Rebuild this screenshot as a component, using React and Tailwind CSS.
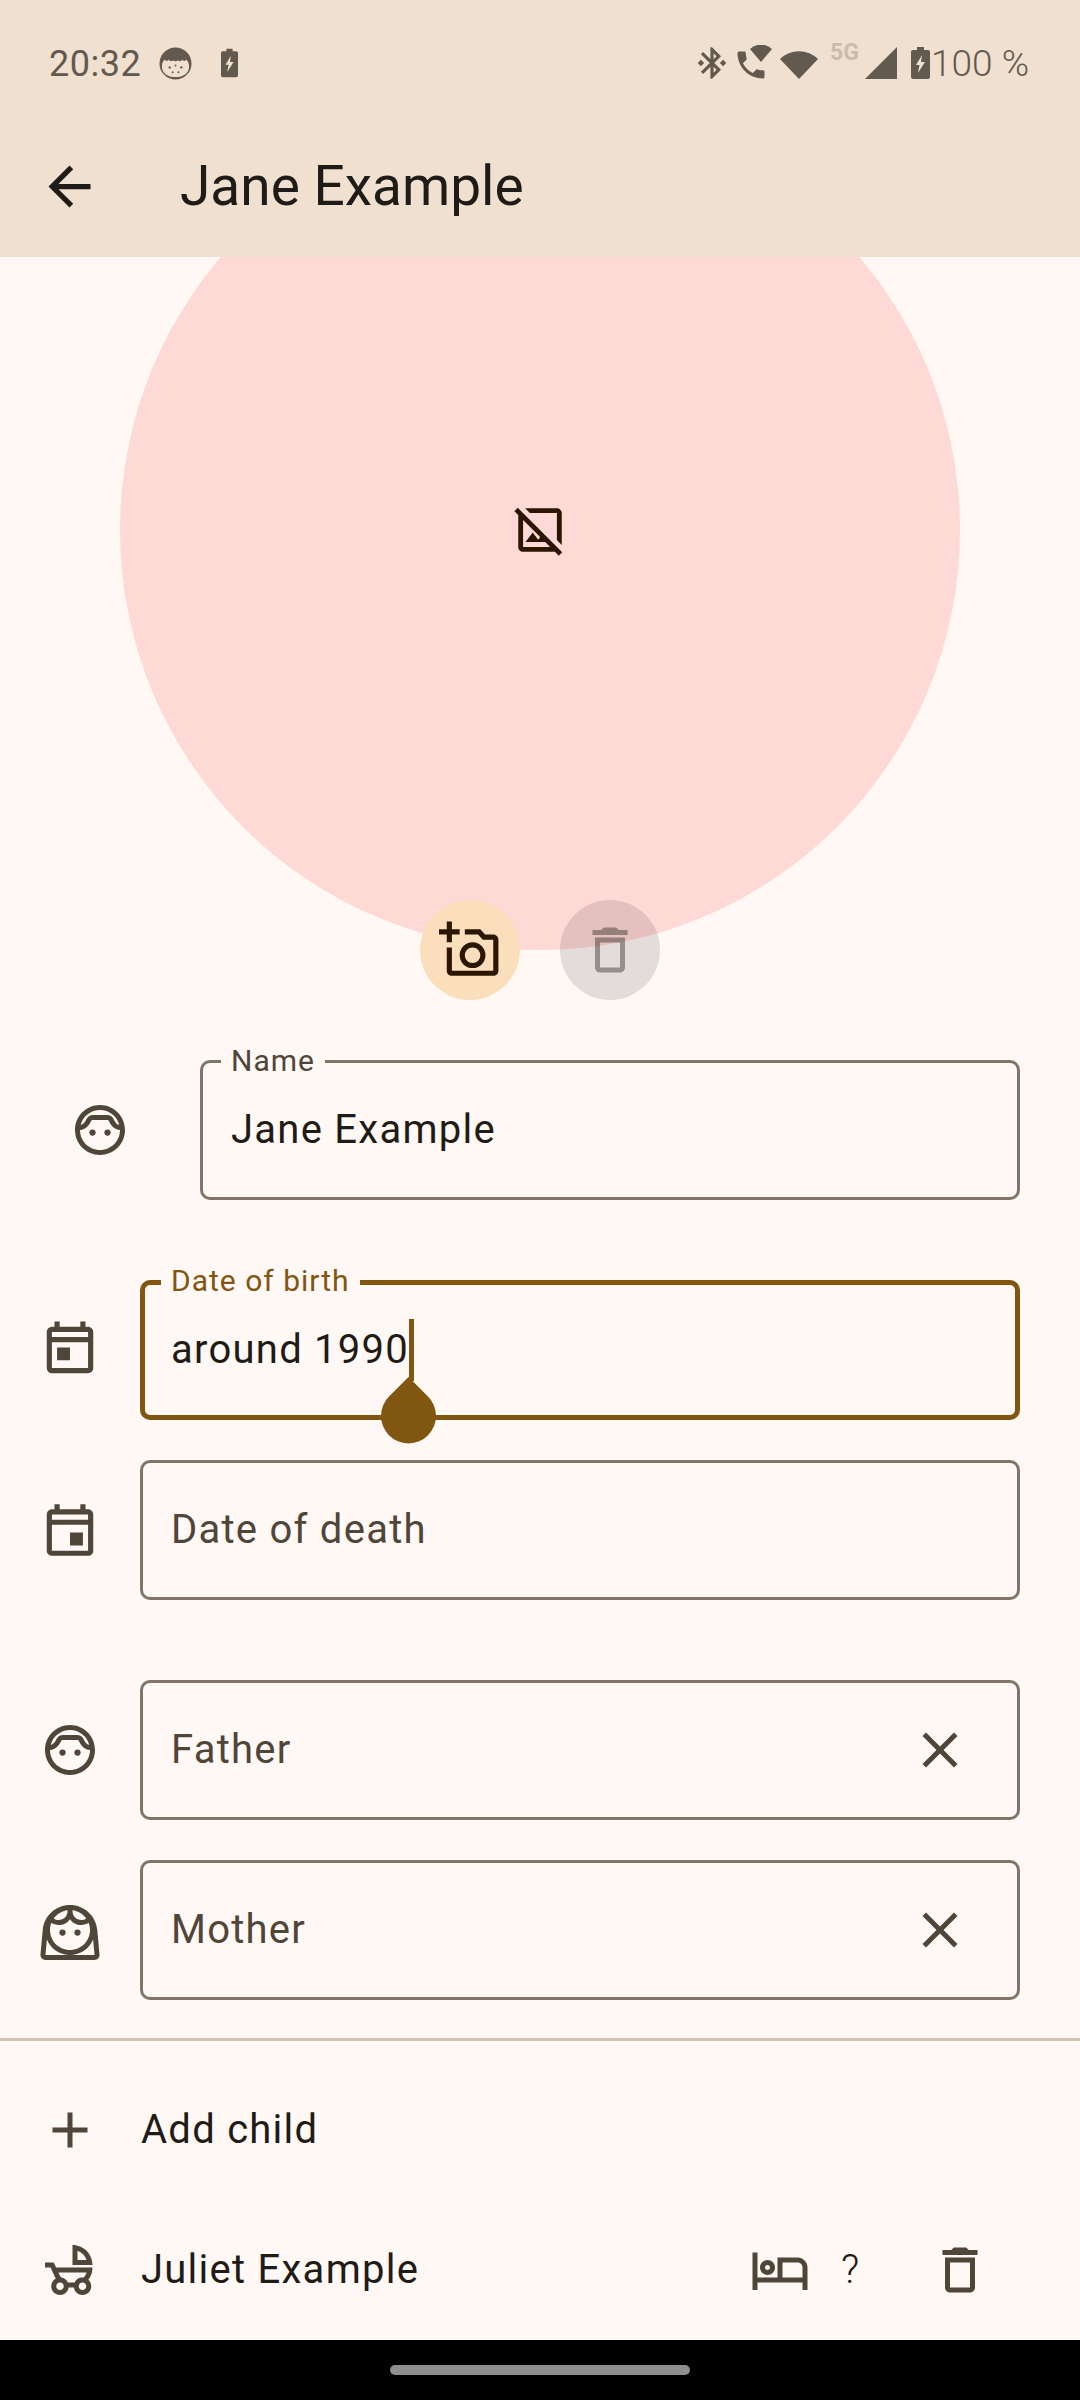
import {
  MdArrowBack, MdOutlineHideImage, MdOutlineAddAPhoto, MdOutlineDelete, MdOutlineFace6, MdOutlineFace3,
  MdOutlineEvent, MdOutlineToday, MdClose, MdAdd, MdOutlineChildFriendly, MdOutlineHotel,
  MdBluetoothConnected, MdPhone,
} from 'react-icons/md';

function ChargingBattery({ className, width = 19 }) {
  return (
    <svg className={className} width={width} height="32" viewBox="0 0 19 32">
      <path d="M6 0h7v3h4a2 2 0 0 1 2 2v25a2 2 0 0 1-2 2H2a2 2 0 0 1-2-2V5a2 2 0 0 1 2-2h4z" fill="#62594f" />
      <path d="M11 8 5 18h3.5L7 26l7-11h-4z" fill="#f0e0d0" />
    </svg>
  );
}

function StatusBar() {
  return (
    <div className="h-[110px] pt-[16px] pl-[49px] pr-[51px] flex items-center text-[#62594f]">
      <span className="mt-[2px] font-['Roboto',sans-serif] text-[36px] tracking-[0.5px] w-[90px]">20:32</span>
      <svg className="ml-[20px]" width="33" height="33" viewBox="0 0 34 34">
        <circle cx="17" cy="17" r="16.5" fill="#62594f" />
        <path d="M3 20c0-3 1-5 3-7 1 2 3 2 4 0 1 2 3 2 4 1 2 1 4 1 6 0 1 1 3 1 4-1 1 2 3 2 4 0 2 2 3 4 3 7 0 7-6 11-14 11S3 27 3 20z" fill="#f0e0d0" />
        <circle cx="11" cy="21" r="1.2" fill="#62594f" />
        <circle cx="23" cy="21" r="1.2" fill="#62594f" />
        <circle cx="17" cy="19" r="1" fill="#62594f" />
        <circle cx="14" cy="26" r="1" fill="#62594f" />
        <circle cx="20" cy="26" r="1" fill="#62594f" />
      </svg>
      <ChargingBattery className="ml-[29px]" width={17} />
      <div className="ml-auto flex items-center">
        <MdBluetoothConnected size={38} />
        <div className="relative w-[36px] h-[36px] ml-[5px]">
          <MdPhone className="absolute left-[-3px] top-[2px]" size={36} />
          <svg className="absolute left-[14px] top-0" width="22" height="17" viewBox="0 0 22 17">
            <path d="M0 4a16 16 0 0 1 22 0L11 17z" fill="#f0e0d0" stroke="#f0e0d0" strokeWidth="3" />
            <path d="M0 4a16 16 0 0 1 22 0L11 17z" fill="#62594f" />
          </svg>
        </div>
        <svg className="ml-[8px]" width="38" height="32" viewBox="0 0 38 32">
          <path d="M0 12a27 27 0 0 1 38 0L19 32z" fill="#62594f" />
        </svg>
        <span className="ml-[12px] w-[28px] self-start mt-[7px] leading-none font-['Roboto',sans-serif] font-bold text-[23px] text-[#c9bcae]">5G</span>
        <svg className="ml-[7px]" width="32" height="32" viewBox="0 0 32 32">
          <path d="M32 0v32H0z" fill="#62594f" />
        </svg>
        <ChargingBattery className="ml-[14px]" />
        <span className="ml-[1px] mt-[2px] font-['Roboto',sans-serif] text-[37px] font-light">100 %</span>
      </div>
    </div>
  );
}

function Field({ label, value, hint, focused, clear, children }) {
  return (
    <div className={`relative flex-1 h-[140px] rounded-[10px] flex items-center pr-[47px] text-[40px] tracking-[1.25px] font-['Roboto',sans-serif] ${focused ? 'border-[5px] border-[#815611] pl-[26px]' : 'border-[3px] border-[#807567] pl-[28px]'}`}>
      {label && (
        <span className={`absolute px-[10px] bg-[#fff8f5] text-[30px] leading-[38px] tracking-[1px] ${focused ? 'top-[-23px] left-[16px] text-[#815611]' : 'top-[-21px] left-[18px] text-[#4f4539]'}`}>
          {label}
        </span>
      )}
      {value && <span className="text-[#1f1b16]">{value}</span>}
      {hint && <span className="text-[#4f4539]">{hint}</span>}
      {clear && <MdClose className="ml-auto text-[#4f4539]" size={60} />}
      {children}
    </div>
  );
}

function FormRow({ icon, wide, className, children }) {
  return (
    <div className={`flex items-center pr-[60px] ${className}`}>
      <div className={`${wide ? 'w-[200px]' : 'w-[140px]'} shrink-0 flex justify-center text-[#4f4539]`}>{icon}</div>
      {children}
    </div>
  );
}

export default function App() {
  return (
    <div className="w-[1080px] h-[2400px] flex flex-col bg-[#fff8f5] overflow-hidden">
      <header className="h-[257px] shrink-0 bg-[#f0e0d0]">
        <StatusBar />
        <div className="h-[147px] pt-[5px] flex items-center pl-[38px] text-[#1f1b16]">
          <MdArrowBack size={63} />
          <h1 className="ml-[79px] font-['Roboto',sans-serif] text-[55px] font-normal">Jane Example</h1>
        </div>
      </header>

      {/* Photo */}
      <section className="relative h-[743px] shrink-0 overflow-hidden">
        <div className="w-[840px] h-[840px] mt-[-147px] mx-auto rounded-full bg-[#ffd9d5] flex items-center justify-center text-[#2c1600]">
          <MdOutlineHideImage size={58} />
        </div>
        <div className="absolute top-[643px] left-[420px] flex gap-[40px]">
          <div className="w-[100px] h-[100px] rounded-full bg-[#fbdebb] flex items-center justify-center text-[#2c1600]">
            <MdOutlineAddAPhoto size={62} />
          </div>
          <div className="w-[100px] h-[100px] rounded-full bg-[#1f1b16]/12 flex items-center justify-center text-[#1f1b16]/40">
            <MdOutlineDelete size={60} />
          </div>
        </div>
      </section>

      {/* Form */}
      <FormRow wide className="mt-[60px]" icon={<MdOutlineFace6 size={60} />}>
        <Field label="Name" value="Jane Example" />
      </FormRow>
      <FormRow className="mt-[80px]" icon={<MdOutlineToday size={62} />}>
        <Field focused label="Date of birth" value="around 1990">
          <svg className="absolute left-[235px] top-[34px]" width="60" height="126" viewBox="0 0 60 126">
            <rect x="29" y="0" width="5" height="62" fill="#815611" />
            <path d="M28.5 58 L47.5 77 A27.5 27.5 0 1 1 9.5 77 Z" fill="#815611" />
          </svg>
        </Field>
      </FormRow>
      <FormRow className="mt-[40px]" icon={<MdOutlineEvent size={62} />}>
        <Field hint="Date of death" />
      </FormRow>
      <FormRow className="mt-[80px]" icon={<MdOutlineFace6 size={60} />}>
        <Field hint="Father" clear />
      </FormRow>
      <FormRow className="mt-[40px]" icon={<MdOutlineFace3 size={60} />}>
        <Field hint="Mother" clear />
      </FormRow>

      <div className="mt-[38px] h-[3px] bg-[#d3c4b4] shrink-0" />

      {/* Children */}
      <div className="mt-[19px] h-[140px] shrink-0 flex items-center font-['Roboto',sans-serif] text-[40px] tracking-[1.25px] text-[#1f1b16]">
        <div className="w-[140px] flex justify-center text-[#4f4539]"><MdAdd size={60} /></div>
        <span className="ml-[1px]">Add child</span>
      </div>
      <div className="h-[140px] shrink-0 flex items-center pr-[90px] font-['Roboto',sans-serif] text-[40px] tracking-[1.25px] text-[#1f1b16]">
        <div className="w-[140px] flex justify-center text-[#4f4539]"><MdOutlineChildFriendly size={60} /></div>
        <span className="ml-[1px] flex-1">Juliet Example</span>
        <MdOutlineHotel className="text-[#4f4539]" size={60} />
        <span className="ml-[30px] w-[20px] text-[40px] font-light tracking-normal text-center">?</span>
        <MdOutlineDelete className="ml-[70px] text-[#4f4539]" size={60} />
      </div>

      {/* Nav bar */}
      <div className="flex-1 bg-black flex items-center justify-center">
        <div className="w-[300px] h-[10px] rounded-full bg-[#8e8e8e]" />
      </div>
    </div>
  );
}
